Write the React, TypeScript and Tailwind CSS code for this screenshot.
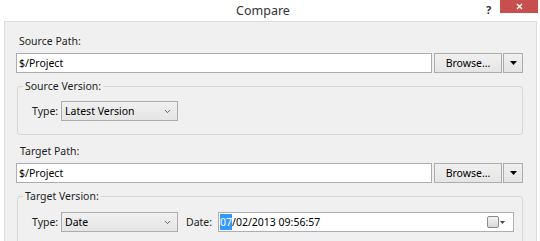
import { ChevronDown } from "lucide-react";

function TextBox({ value }: { value: string }) {
  return (
    <div className="flex-1 h-[20px] bg-white border border-[#abadb3] flex items-center pl-[2px] text-black">
      {value}
    </div>
  );
}

function BrowseRow({ value }: { value: string }) {
  return (
    <div className="flex items-center ml-[11px] mr-[13px]">
      <TextBox value={value} />
      <button className="ml-[2px] w-[68px] h-[20px] border border-[#acacac] bg-gradient-to-b from-[#f0f0f0] to-[#e5e5e5] text-black">
        Browse...
      </button>
      <button className="ml-[1px] w-[20px] h-[20px] border border-[#acacac] bg-gradient-to-b from-[#f0f0f0] to-[#e5e5e5] flex items-center justify-center">
        <svg width="7" height="4" viewBox="0 0 7 4">
          <path d="M0 0h7L3.5 4z" fill="#000" />
        </svg>
      </button>
    </div>
  );
}

function ComboBox({ value }: { value: string }) {
  return (
    <div className="w-[117px] h-[20px] border border-[#acacac] bg-gradient-to-b from-[#f0f0f0] to-[#e5e5e5] flex items-center pl-[3px] pr-[5px] text-black">
      <span className="flex-1">{value}</span>
      <ChevronDown size={9} strokeWidth={2.5} className="text-[#555]" />
    </div>
  );
}

function Group({ title, children }: { title: string; children: React.ReactNode }) {
  return (
    <fieldset className="ml-[12px] mr-[13px] border border-[#d5d5d5] rounded-[3px]">
      <legend className="ml-[5px] px-[2px] leading-[16px] text-[#1e1e1e]">{title}</legend>
      {children}
    </fieldset>
  );
}

export default function App() {
  return (
    <div className="w-[540px] h-[241px] bg-white overflow-hidden flex flex-col text-[10.5px] leading-[16px] text-[#1e1e1e]" style={{ fontFamily: '"Noto Sans", sans-serif' }}>
      <div className="relative h-[21px] shrink-0 flex items-center justify-center">
        <span className="text-[12.5px] text-[#333] ml-[-14px]">Compare</span>
        <span className="absolute left-[486px] top-[2px] text-[11px] font-bold text-[#333]">?</span>
        <div className="absolute left-[500px] top-0 w-[38px] h-[13px] bg-[#c7504e] flex items-center justify-center">
          <svg width="7" height="7" viewBox="0 0 7 7">
            <path d="M1 1l5 5M6 1l-5 5" stroke="#fff" strokeWidth="1.4" />
          </svg>
        </div>
      </div>

      <div className="flex-1 ml-[4px] mr-[3px] border border-[#dcdcdc] bg-[#f0f0f0] pt-[11px]">
        <div className="ml-[14px]">Source Path:</div>
        <div className="mt-[4px]">
          <BrowseRow value="$/Project" />
        </div>

        <div className="mt-[5px]">
          <Group title="Source Version:">
            <div className="flex items-center mt-[7px] mb-[13px] pl-[14px]">
              <span className="w-[29px]">Type:</span>
              <ComboBox value="Latest Version" />
            </div>
          </Group>
        </div>

        <div className="ml-[15px] mt-[8px]">Target Path:</div>
        <div className="mt-[4px]">
          <BrowseRow value="$/Project" />
        </div>

        <div className="mt-[5px]">
          <Group title="Target Version:">
            <div className="flex items-center mt-[8px] mb-[13px] pl-[14px]">
              <span className="w-[29px]">Type:</span>
              <ComboBox value="Date" />
              <span className="ml-[8px] w-[32px]">Date:</span>
              <div className="w-[296px] h-[20px] bg-white border border-[#abadb3] flex items-center pl-[1px] pr-[8px] text-black">
                <span className="bg-[#3399ff] text-white">07</span>
                <span className="flex-1">/02/2013 09:56:57</span>
                <div className="w-[12px] h-[12px] rounded-[2px] border border-[#8a8a8a] bg-gradient-to-b from-[#f4f4f4] to-[#d8d8d8]" />
                <svg className="ml-[1px]" width="5" height="3" viewBox="0 0 5 3">
                  <path d="M0 0h5L2.5 3z" fill="#444" />
                </svg>
              </div>
            </div>
          </Group>
        </div>
      </div>
    </div>
  );
}
